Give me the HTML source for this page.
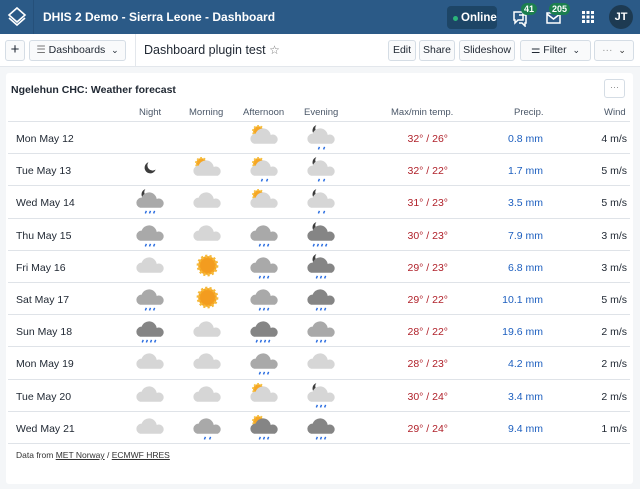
<!DOCTYPE html>
<html><head><meta charset="utf-8"><style>
*{box-sizing:border-box;margin:0;padding:0}
body{width:640px;height:489px;background:#f4f6f8;font-family:"Liberation Sans",sans-serif;position:relative;overflow:hidden;color:#212934}
.hdr{position:absolute;left:0;top:0;width:640px;height:34px;background:#2b5a87}
.hdr .t{position:absolute;left:43px;top:10px;color:#fff;font-size:12px;font-weight:bold}
.logo{position:absolute;left:0;top:0;width:34px;height:34px;border-right:1px solid #25507a}
.online{position:absolute;left:447px;top:6px;width:50px;height:23px;background:#1d4566;border-radius:4px;color:#fff;font-size:11.5px;font-weight:bold;padding:6px 0 0 14px}
.online:before{content:"";position:absolute;left:6px;top:10px;width:5px;height:5px;border-radius:50%;background:#2bb57a}
.badge{position:absolute;background:#1c7f4f;color:#fff;font-size:9px;font-weight:bold;border-radius:8px;height:12px;line-height:12px;padding:0 3px}
.av{position:absolute;left:609px;top:5px;width:24px;height:24px;border-radius:50%;background:#1d3a52;color:#fff;font-size:11px;font-weight:bold;text-align:center;line-height:24px}
.bar{position:absolute;left:0;top:34px;width:640px;height:33px;background:#fff;border-bottom:1px solid #e3e7ec}
.btn{position:absolute;top:40px;height:21px;border:1px solid #d5dde5;border-radius:3px;background:#f9fafb;font-size:10.5px;line-height:19px;padding:0 4px;color:#212934;white-space:nowrap;overflow:hidden;text-align:center}
.card{position:absolute;left:6px;top:73px;width:627px;height:411px;background:#fff;border-radius:3px}
.ttl{position:absolute;left:11px;top:84px;font-size:10.5px;font-weight:bold}
.more{position:absolute;left:604px;top:79px;width:21px;height:19px;border:1px solid #d5dde5;border-radius:3px;font-size:9px;color:#888;text-align:center;line-height:14px}
.th{position:absolute;top:107px;font-size:9.5px;color:#4a5768}
.row{position:absolute;left:8px;width:622px;height:32px;border-top:1px solid #dfe3e8}
.d{position:absolute;left:8px;top:11px;font-size:10.5px}
.tp{position:absolute;right:182px;top:11px;font-size:10.5px;color:#b0212a}
.pr{position:absolute;right:87px;top:11px;font-size:10.5px;color:#1d5fbf}
.wd{position:absolute;right:3px;top:11px;font-size:10.5px}
.ic{position:absolute;top:0px;width:29px;height:29px}
.foot{position:absolute;left:16px;top:450px;font-size:8.5px;color:#333}
.foot u{text-decoration:underline}
</style></head><body>
<svg width="0" height="0" style="position:absolute">
<defs>
<g id="cl"><path d="M4 21a5 5 0 0 1 1.5-9.8 7.5 7.5 0 0 1 14.5 1.3A4.3 4.3 0 0 1 24 21z" fill="#d6d6d6"/></g>
<g id="cg"><path d="M4 21a5 5 0 0 1 1.5-9.8 7.5 7.5 0 0 1 14.5 1.3A4.3 4.3 0 0 1 24 21z" fill="#a9a9a9"/></g>
<g id="cd"><path d="M4 21a5 5 0 0 1 1.5-9.8 7.5 7.5 0 0 1 14.5 1.3A4.3 4.3 0 0 1 24 21z" fill="#858585"/></g>
<g id="sun"><circle cx="14" cy="14" r="9" fill="#f6a623" stroke="#f5b93a" stroke-width="3" stroke-dasharray="2 2"/><circle cx="14" cy="14" r="7" fill="#f39c1f"/></g>
<g id="ss"><circle cx="8" cy="9" r="5" fill="#f6a623" stroke="#f5c040" stroke-width="2.2" stroke-dasharray="1.6 1.6"/></g>
<g id="mm"><path d="M9 3a5.5 5.5 0 1 0 7 7 5 5 0 0 1-7-7z" fill="#3c3c3c"/></g>
<g id="r2"><path d="M12 24l-1 2.5M17 24l-1 2.5" stroke="#2a6de0" stroke-width="1.4"/></g>
<g id="r3"><path d="M10 24l-1 2.5M14 24l-1 2.5M18 24l-1 2.5" stroke="#2a6de0" stroke-width="1.4"/></g>
<g id="r4"><path d="M7 24l-1 2.5M11 24l-1 2.5M15 24l-1 2.5M19 24l-1 2.5" stroke="#2a6de0" stroke-width="1.4"/></g>
</defs></svg>

<div class="hdr">
<div class="logo"><svg width="34" height="34"><g fill="none" stroke="#fff" stroke-width="1.6"><path d="M17 8l8 7-8 7-8-7z"/><path d="M9 18l8 7 8-7"/></g></svg></div>
<div class="t">DHIS 2 Demo - Sierra Leone - Dashboard</div>
<div class="online">Online</div>
<svg style="position:absolute;left:511px;top:9px" width="18" height="18"><path d="M3 3h9v8H7l-3 3v-3H3z M8 6h7v8h-1v3l-3-3H8" fill="none" stroke="#fff" stroke-width="1.5"/></svg>
<div class="badge" style="left:521px;top:3px">41</div>
<svg style="position:absolute;left:546px;top:11px" width="16" height="14"><rect x="1" y="2" width="13" height="10" fill="none" stroke="#fff" stroke-width="1.5"/><path d="M1 3l6.5 5 6.5-5" fill="none" stroke="#fff" stroke-width="1.5"/></svg>
<div class="badge" style="left:549px;top:3px">205</div>
<svg style="position:absolute;left:582px;top:11px" width="12" height="12" fill="#fff"><rect x="0" y="0" width="3" height="3"/><rect x="4.5" y="0" width="3" height="3"/><rect x="9" y="0" width="3" height="3"/><rect x="0" y="4.5" width="3" height="3"/><rect x="4.5" y="4.5" width="3" height="3"/><rect x="9" y="4.5" width="3" height="3"/><rect x="0" y="9" width="3" height="3"/><rect x="4.5" y="9" width="3" height="3"/><rect x="9" y="9" width="3" height="3"/></svg>
<div class="av">JT</div>
</div>

<div class="bar"></div>
<div style="position:absolute;left:135px;top:34px;width:1px;height:33px;background:#e3e7ec"></div>
<div class="btn" style="left:5px;width:20px;font-size:15px;line-height:18px;padding:0">+</div>
<div class="btn" style="left:29px;width:97px"><span style="color:#777">☰</span> Dashboards &nbsp;<span style="font-size:9px">⌄</span></div>
<div style="position:absolute;left:144px;top:43px;font-size:12.5px">Dashboard plugin test <span style="color:#777;font-size:12px">☆</span></div>
<div class="btn" style="left:388px;width:28px;padding:0">Edit</div>
<div class="btn" style="left:419px;width:36px;padding:0">Share</div>
<div class="btn" style="left:459px;width:56px;padding:0">Slideshow</div>
<div class="btn" style="left:520px;width:71px">⚌ Filter &nbsp;<span style="font-size:9px">⌄</span></div>
<div class="btn" style="left:594px;width:40px;color:#999">··· &nbsp;<span style="color:#333;font-size:9px">⌄</span></div>

<div class="card"></div>
<div class="ttl">Ngelehun CHC: Weather forecast</div>
<div class="more">···</div>
<div class="th" style="left:139px">Night</div>
<div class="th" style="left:189px">Morning</div>
<div class="th" style="left:243px">Afternoon</div>
<div class="th" style="left:304px">Evening</div>
<div class="th" style="left:391px">Max/min temp.</div>
<div class="th" style="left:514px">Precip.</div>
<div class="th" style="left:604px">Wind</div>

<div class="row" style="top:121px"><div class="d">Mon May 12</div>
<svg class="ic" viewBox="0 0 28 28" style="left:242px"><use href="#ss"/><use href="#cl"/></svg>
<svg class="ic" viewBox="0 0 28 28" style="left:299px"><use href="#mm"/><use href="#cl"/><use href="#r2"/></svg>
<div class="tp">32° / 26°</div><div class="pr">0.8 mm</div><div class="wd">4 m/s</div></div>

<div class="row" style="top:153px"><div class="d">Tue May 13</div>
<svg class="ic" viewBox="0 0 28 28" style="left:128px"><g transform="translate(3 5)"><use href="#mm"/></g></svg>
<svg class="ic" viewBox="0 0 28 28" style="left:185px"><use href="#ss"/><use href="#cl"/></svg>
<svg class="ic" viewBox="0 0 28 28" style="left:242px"><use href="#ss"/><use href="#cl"/><use href="#r2"/></svg>
<svg class="ic" viewBox="0 0 28 28" style="left:299px"><use href="#mm"/><use href="#cl"/><use href="#r2"/></svg>
<div class="tp">32° / 22°</div><div class="pr">1.7 mm</div><div class="wd">5 m/s</div></div>

<div class="row" style="top:185px"><div class="d">Wed May 14</div>
<svg class="ic" viewBox="0 0 28 28" style="left:128px"><use href="#mm"/><use href="#cg"/><use href="#r3"/></svg>
<svg class="ic" viewBox="0 0 28 28" style="left:185px"><use href="#cl"/></svg>
<svg class="ic" viewBox="0 0 28 28" style="left:242px"><use href="#ss"/><use href="#cl"/></svg>
<svg class="ic" viewBox="0 0 28 28" style="left:299px"><use href="#mm"/><use href="#cl"/><use href="#r2"/></svg>
<div class="tp">31° / 23°</div><div class="pr">3.5 mm</div><div class="wd">5 m/s</div></div>

<div class="row" style="top:218px"><div class="d">Thu May 15</div>
<svg class="ic" viewBox="0 0 28 28" style="left:128px"><use href="#cg"/><use href="#r3"/></svg>
<svg class="ic" viewBox="0 0 28 28" style="left:185px"><use href="#cl"/></svg>
<svg class="ic" viewBox="0 0 28 28" style="left:242px"><use href="#cg"/><use href="#r3"/></svg>
<svg class="ic" viewBox="0 0 28 28" style="left:299px"><use href="#mm"/><use href="#cd"/><use href="#r4"/></svg>
<div class="tp">30° / 23°</div><div class="pr">7.9 mm</div><div class="wd">3 m/s</div></div>

<div class="row" style="top:250px"><div class="d">Fri May 16</div>
<svg class="ic" viewBox="0 0 28 28" style="left:128px"><use href="#cl"/></svg>
<svg class="ic" viewBox="0 0 28 28" style="left:185px"><use href="#sun"/></svg>
<svg class="ic" viewBox="0 0 28 28" style="left:242px"><use href="#cg"/><use href="#r3"/></svg>
<svg class="ic" viewBox="0 0 28 28" style="left:299px"><use href="#mm"/><use href="#cd"/><use href="#r3"/></svg>
<div class="tp">29° / 23°</div><div class="pr">6.8 mm</div><div class="wd">3 m/s</div></div>

<div class="row" style="top:282px"><div class="d">Sat May 17</div>
<svg class="ic" viewBox="0 0 28 28" style="left:128px"><use href="#cg"/><use href="#r3"/></svg>
<svg class="ic" viewBox="0 0 28 28" style="left:185px"><use href="#sun"/></svg>
<svg class="ic" viewBox="0 0 28 28" style="left:242px"><use href="#cg"/><use href="#r3"/></svg>
<svg class="ic" viewBox="0 0 28 28" style="left:299px"><use href="#cd"/><use href="#r3"/></svg>
<div class="tp">29° / 22°</div><div class="pr">10.1 mm</div><div class="wd">5 m/s</div></div>

<div class="row" style="top:314px"><div class="d">Sun May 18</div>
<svg class="ic" viewBox="0 0 28 28" style="left:128px"><use href="#cd"/><use href="#r4"/></svg>
<svg class="ic" viewBox="0 0 28 28" style="left:185px"><use href="#cl"/></svg>
<svg class="ic" viewBox="0 0 28 28" style="left:242px"><use href="#cd"/><use href="#r4"/></svg>
<svg class="ic" viewBox="0 0 28 28" style="left:299px"><use href="#cg"/><use href="#r3"/></svg>
<div class="tp">28° / 22°</div><div class="pr">19.6 mm</div><div class="wd">2 m/s</div></div>

<div class="row" style="top:346px"><div class="d">Mon May 19</div>
<svg class="ic" viewBox="0 0 28 28" style="left:128px"><use href="#cl"/></svg>
<svg class="ic" viewBox="0 0 28 28" style="left:185px"><use href="#cl"/></svg>
<svg class="ic" viewBox="0 0 28 28" style="left:242px"><use href="#cg"/><use href="#r3"/></svg>
<svg class="ic" viewBox="0 0 28 28" style="left:299px"><use href="#cl"/></svg>
<div class="tp">28° / 23°</div><div class="pr">4.2 mm</div><div class="wd">2 m/s</div></div>

<div class="row" style="top:379px"><div class="d">Tue May 20</div>
<svg class="ic" viewBox="0 0 28 28" style="left:128px"><use href="#cl"/></svg>
<svg class="ic" viewBox="0 0 28 28" style="left:185px"><use href="#cl"/></svg>
<svg class="ic" viewBox="0 0 28 28" style="left:242px"><use href="#ss"/><use href="#cl"/></svg>
<svg class="ic" viewBox="0 0 28 28" style="left:299px"><use href="#mm"/><use href="#cl"/><use href="#r3"/></svg>
<div class="tp">30° / 24°</div><div class="pr">3.4 mm</div><div class="wd">2 m/s</div></div>

<div class="row" style="top:411px;border-bottom:1px solid #dfe3e8;height:33px"><div class="d">Wed May 21</div>
<svg class="ic" viewBox="0 0 28 28" style="left:128px"><use href="#cl"/></svg>
<svg class="ic" viewBox="0 0 28 28" style="left:185px"><use href="#cg"/><use href="#r2"/></svg>
<svg class="ic" viewBox="0 0 28 28" style="left:242px"><use href="#ss"/><use href="#cd"/><use href="#r3"/></svg>
<svg class="ic" viewBox="0 0 28 28" style="left:299px"><use href="#cd"/><use href="#r3"/></svg>
<div class="tp">29° / 24°</div><div class="pr">9.4 mm</div><div class="wd">1 m/s</div></div>

<div class="foot">Data from <u>MET Norway</u> / <u>ECMWF HRES</u></div>
</body></html>
